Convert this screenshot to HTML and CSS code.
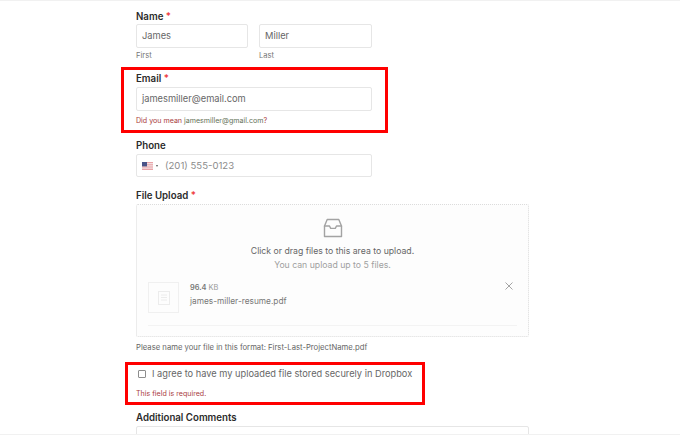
FILE: index.html
```html
<!DOCTYPE html>
<html lang="en">

<head>
  <meta charset="UTF-8">
  <title>File Upload Form</title>
  <link rel="stylesheet" href="styles.css">
</head>

<body>
  <form class="form">
    <div class="field field-name">
      <div class="label">Name <span class="req">*</span></div>
      <div class="name-row">
        <div class="name-col">
          <div class="input">James</div>
          <div class="sublabel">First</div>
        </div>
        <div class="name-col">
          <div class="input">Miller</div>
          <div class="sublabel">Last</div>
        </div>
      </div>
    </div>

    <div class="field field-email marked">
      <div class="label">Email <span class="req">*</span></div>
      <div class="input input-wide">jamesmiller@email.com</div>
      <div class="error">Did you mean <span class="suggest">jamesmiller@gmail.com</span>?</div>
    </div>

    <div class="field field-phone">
      <div class="label">Phone</div>
      <div class="input input-wide phone">
        <svg class="flag" width="11" height="8" viewBox="0 0 11 8">
          <rect width="11" height="8" fill="#e9a3a8" />
          <rect y="1.2" width="11" height="1" fill="#f5eeee" />
          <rect y="3.4" width="11" height="1" fill="#f5eeee" />
          <rect y="5.6" width="11" height="1" fill="#f5eeee" />
          <rect width="5" height="4.4" fill="#4a5488" />
        </svg>
        <span class="caret"></span>
        <span class="placeholder">(201) 555-0123</span>
      </div>
    </div>

    <div class="field field-upload">
      <div class="label">File Upload <span class="req">*</span></div>
      <div class="dropzone">
        <svg class="inbox" width="20" height="20" viewBox="0 0 20 20" fill="none" stroke="#a3a3a3" stroke-width="1.4"
          stroke-linejoin="round" stroke-linecap="round">
          <path d="M4.2 1.5h11.6L18.5 8v10.5h-17V8z" />
          <path d="M1.5 8h5l1.2 2.4h4.6L13.5 8h5" />
        </svg>
        <div class="drop-title">Click or drag files to this area to upload.</div>
        <div class="drop-note">You can upload up to 5 files.</div>
        <div class="file-row">
          <div class="thumb">
            <svg width="12" height="14" viewBox="0 0 12 14" fill="none" stroke="#ececec" stroke-width="1">
              <rect x="0.5" y="0.5" width="11" height="13" />
              <path d="M3 4h6M3 6.5h6M3 9h6" />
            </svg>
          </div>
          <div class="file-info">
            <div class="file-size"><b>96.4</b> KB</div>
            <div class="file-name">james-miller-resume.pdf</div>
          </div>
          <svg class="remove" width="8" height="8" viewBox="0 0 8 8" stroke="#9a9a9a" stroke-width="0.9">
            <path d="M0.5 0.5l7 7M7.5 0.5l-7 7" />
          </svg>
        </div>
      </div>
      <div class="helper">Please name your file in this format: First-Last-ProjectName.pdf</div>
    </div>

    <div class="field field-consent marked">
      <label class="check-row">
        <span class="checkbox"></span>
        <span>I agree to have my uploaded file stored securely in Dropbox</span>
      </label>
      <div class="error">This field is required.</div>
    </div>

    <div class="field field-comments">
      <div class="label">Additional Comments</div>
      <div class="textarea"></div>
    </div>
  </form>
</body>

</html>
```

FILE: styles.css
```css
* {
  box-sizing: border-box;
  margin: 0;
  padding: 0;
}

html,
body {
  height: 100%;
  overflow: hidden;
}

body {
  display: flex;
  flex-direction: column;
  font-family: Inter, "Noto Sans", sans-serif;
  background-color: #fff;
  color: #666;
  border-top: 1px solid #f1f1f1;
  border-bottom: 1px solid #f1f1f1;
}

.form {
  flex: 1;
  min-height: 0;
  overflow: hidden;
  width: 530px;
  padding: 9px 1px 0 136px;
}

.field {
  position: relative;
}

/* red annotation boxes sit over the form */
.marked::after {
  content: "";
  position: absolute;
  box-sizing: border-box;
  border: 3px solid #f00;
  pointer-events: none;
}

.field-email::after {
  top: -5px;
  left: -15px;
  width: 267px;
  height: 66px;
}

.field-consent::after {
  top: -6px;
  left: -11px;
  width: 300px;
  height: 43px;
}

.label {
  font-size: 9.7px;
  line-height: 13px;
  font-weight: 600;
  color: #2b2b2b;
  margin-bottom: 2px;
}

.field-name .label,
.field-comments .label {
  margin-bottom: 1px;
}

.req {
  color: #e33;
}

.name-row {
  display: grid;
  grid-template-columns: 112px 113px;
  column-gap: 11px;
  width: 236px;
}

.input {
  height: 24px;
  border: 1px solid #e6e6e6;
  border-radius: 2px;
  padding: 0 5px;
  font-size: 9.3px;
  line-height: 22px;
  color: #666;
}

.input-wide {
  width: 236px;
}

.sublabel {
  font-size: 7.6px;
  line-height: 11px;
  color: #777;
  margin-top: 2px;
}

.field-email {
  margin-top: 11px;
}

.error {
  font-size: 7.1px;
  line-height: 10px;
  color: #a83a3a;
  margin-top: 5px;
}

.suggest {
  color: #5f6f55;
}

.field-phone {
  margin-top: 13px;
}

.phone {
  display: flex;
  align-items: center;
  height: 23px;
}

.flag {
  flex: none;
}

.caret {
  width: 0;
  height: 0;
  border-left: 1.5px solid transparent;
  border-right: 1.5px solid transparent;
  border-top: 2px solid #555;
  margin-left: 3px;
}

.placeholder {
  font-size: 9.6px;
  color: #8c8c8c;
  margin-left: 7px;
}

.field-upload {
  margin-top: 12px;
}

.dropzone {
  height: 133px;
  border: 1px dotted #dcdcdc;
  border-radius: 2px;
  background-color: #fdfdfd;
  padding: 13px 11px 0;
  text-align: center;
}

.inbox {
  display: block;
  margin: 0 auto;
}

.drop-title {
  font-size: 8.7px;
  line-height: 12px;
  color: #666;
  margin-top: 7px;
}

.drop-note {
  font-size: 8.7px;
  line-height: 12px;
  color: #a0a0a0;
  margin-top: 2px;
}

.file-row {
  display: flex;
  align-items: flex-start;
  height: 44px;
  margin-top: 11px;
  border-bottom: 1px solid #f3f3f3;
  text-align: left;
}

.thumb {
  width: 31px;
  height: 31px;
  border: 1px solid #f0f0f0;
  display: flex;
  align-items: center;
  justify-content: center;
}

.file-info {
  flex: 1;
  margin-left: 11px;
}

.file-size {
  font-size: 7.4px;
  line-height: 10px;
  color: #999;
  margin-top: 1px;
}

.file-size b {
  color: #777;
  font-weight: 600;
}

.file-name {
  font-size: 8.3px;
  line-height: 11px;
  color: #777;
  margin-top: 3px;
}

.remove {
  margin: 0 4px 0 0;
}

.helper {
  font-size: 7.7px;
  line-height: 11px;
  color: #666;
  margin-top: 5px;
}

.field-consent {
  margin-top: 15px;
}

.check-row {
  display: flex;
  align-items: center;
  font-size: 9.25px;
  line-height: 12px;
  color: #666;
  padding-left: 2px;
}

.checkbox {
  width: 8px;
  height: 8px;
  border: 1px solid #8d8d8d;
  border-radius: 1px;
  margin-right: 6px;
}

.field-consent .error {
  margin-top: 9px;
}

.field-comments {
  margin-top: 12px;
}

.textarea {
  height: 40px;
  border: 1px solid #e6e6e6;
  border-radius: 2px;
  margin-top: 2px;
}
```
